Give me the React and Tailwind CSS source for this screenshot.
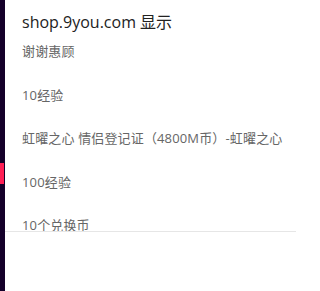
export default function App() {
  const items = [
    "谢谢惠顾",
    "10经验",
    "虹曜之心 情侣登记证（4800M币）-虹曜之心",
    "100经验",
    "10个兑换币",
  ];

  return (
    <div
      className="flex h-[291px] w-[296px] overflow-hidden bg-white"
      style={{ fontFamily: '"Segoe UI", "Open Sans", "Noto Sans CJK SC", sans-serif' }}
    >
      <div className="flex w-[5px] shrink-0 flex-col bg-[#14002a]">
        <div className="h-[163px]" />
        <div className="h-[21px] w-[4px] bg-[#ff1f55]" />
      </div>
      <div className="flex flex-1 flex-col">
        <div className="h-[232px] overflow-hidden border-b border-[#e6e6e6] pl-[17px]">
          <h1 className="pt-[12px] text-[16px] leading-[20px] text-[#222]">shop.9you.com 显示</h1>
          <ul className="mt-[10px] flex flex-col gap-[24.5px] text-[13px] leading-[19px] tracking-[0.15px] text-[#666]">
            {items.map((t) => (
              <li key={t}>{t}</li>
            ))}
          </ul>
        </div>
      </div>
    </div>
  );
}
